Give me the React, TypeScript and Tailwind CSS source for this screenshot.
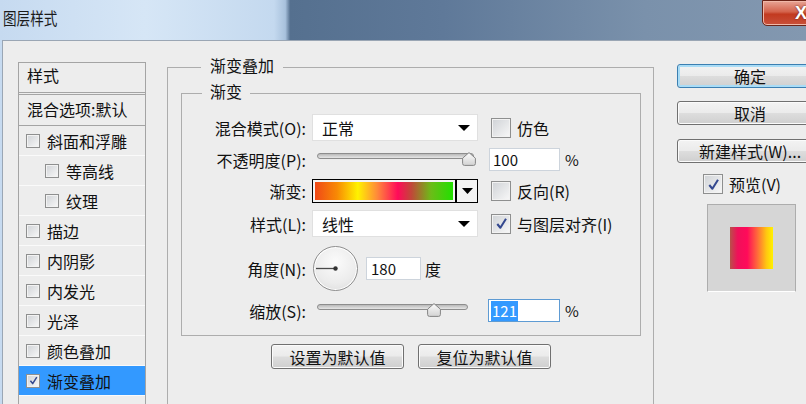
import React from "react";

const sidebarItems = [
  { label: "斜面和浮雕" },
  { label: "等高线", indent: true },
  { label: "纹理", indent: true },
  { label: "描边" },
  { label: "内阴影" },
  { label: "内发光" },
  { label: "光泽" },
  { label: "颜色叠加" },
  { label: "渐变叠加", checked: true, selected: true },
  { label: "图案叠加" },
];

function Box({ checked = false, big = false }: { checked?: boolean; big?: boolean }) {
  return (
    <span
      className={`flex shrink-0 items-center justify-center border border-[#8e8f8f] bg-[linear-gradient(135deg,#cfd2d6,#f8f8f8)] shadow-[inset_0_0_0_1px_#f2f2f2] ${
        big ? "h-[20px] w-[20px]" : "h-[14px] w-[14px]"
      }`}
    >
      {checked && (
        <svg viewBox="0 0 16 16" className={big ? "h-[15px] w-[15px]" : "h-[11px] w-[11px]"}>
          <path d="M3.5 8.5 L6.8 12.5 L12.8 3" fill="none" stroke="#34488f" strokeWidth="2.2" strokeLinejoin="round" />
        </svg>
      )}
    </span>
  );
}

function Button({ children, primary = false, className = "" }: { children: React.ReactNode; primary?: boolean; className?: string }) {
  return (
    <div
      className={`flex items-center justify-center rounded-[3px] border bg-[linear-gradient(#f3f3f3_0%,#ebebeb_48%,#dddddd_52%,#cfcfcf_100%)] ${
        primary ? "border-[#3c7fb1] shadow-[inset_0_0_0_2px_#a9dcf6]" : "border-[#707070] shadow-[inset_0_0_0_1px_#fbfbfb]"
      } ${className}`}
    >
      {children}
    </div>
  );
}

function Select({ value }: { value: string }) {
  return (
    <div className="flex h-[27px] w-[166px] items-center justify-between border border-[#e0e0e0] bg-white pl-[9px] pr-[7px]">
      <span>{value}</span>
      <svg width="12" height="6" viewBox="0 0 12 6">
        <path d="M0 0H12L6 6Z" fill="#000" />
      </svg>
    </div>
  );
}

function Slider({ track, thumb }: { track: string; thumb: string }) {
  return (
    <div className="relative h-[23px] w-[166px]">
      <div className={`ml-[5px] mt-[5px] h-[6px] rounded-full border border-[#8d8d8d] bg-[linear-gradient(#b9b9b9,#e6e6e6)] ${track}`} />
      <svg className={`absolute top-[4px] ${thumb}`} width="14" height="14" viewBox="0 0 14 14">
        <defs>
          <linearGradient id="th" x1="0" y1="0" x2="0" y2="1">
            <stop offset="0" stopColor="#fdfdfd" />
            <stop offset="1" stopColor="#d2d2d2" />
          </linearGradient>
        </defs>
        <path d="M7 0.6 L13.4 6.2 V11.5 Q13.4 13.4 11.5 13.4 H2.5 Q0.6 13.4 0.6 11.5 V6.2 Z" fill="url(#th)" stroke="#858585" strokeWidth="1" />
      </svg>
    </div>
  );
}

function Row({ label, children, className = "" }: { label: string; children: React.ReactNode; className?: string }) {
  return (
    <div className={`flex items-center ${className}`}>
      <span className="w-[124px] shrink-0 text-right">{label}</span>
      <div className="ml-[6px] flex items-center">{children}</div>
    </div>
  );
}

export default function App() {
  return (
    <div className="flex h-[404px] w-[806px] flex-col overflow-hidden bg-[linear-gradient(to_right,#c6daf0_0%,#d6e6f6_18%,#c4d9ef_34%,#a8c1dc_35.4%,#55708f_36%,#5f7999_55%,#7a91ab_80%,#8398b0_100%)] font-['Noto_Sans_CJK_SC',sans-serif] text-[16px] leading-[20px] text-[#111]">
      {/* title bar */}
      <div className="flex h-[40px] shrink-0 items-start">
        <span className="ml-[3px] mt-[8px] origin-left scale-x-[0.8] text-[17px] text-[#1b1b1b]">图层样式</span>
        <div className="-mr-[30px] ml-auto flex h-[26px] w-[74px] items-center rounded-bl-[5px] border border-[#6b2418] bg-[linear-gradient(#e8a596_0%,#d4634c_45%,#c23a20_55%,#c8503a_100%)] pl-[32px] shadow-[inset_0_0_0_1px_#f0b8a8]">
          <span className="font-['Liberation_Sans',sans-serif] text-[18px] font-bold text-white [text-shadow:0_0_2px_#5a1a10]">X</span>
        </div>
      </div>

      {/* body */}
      <div className="ml-[2px] flex min-h-0 flex-1 items-start border-l border-t border-[#9aa6b4] bg-[#ededed]">
        {/* sidebar */}
        <div className="ml-[15px] mt-[21px] w-[128px] shrink-0 border border-[#a4a4a4]">
          <div className="h-[32px] border-b-[3px] border-double border-[#a4a4a4] pl-[8px] pt-[2px]">样式</div>
          <div className="flex h-[31px] items-center border-b border-[#a4a4a4] pb-[2px] pl-[8px]">混合选项:默认</div>
          {sidebarItems.map((it) => (
            <div
              key={it.label}
              className={`flex h-[30px] items-center gap-[7px] border-b border-[#fafafa] ${it.indent ? "pl-[26px]" : "pl-[7px]"} ${
                it.selected ? "bg-[#3399ff]" : ""
              }`}
            >
              <Box checked={it.checked} />
              <span>{it.label}</span>
            </div>
          ))}
        </div>

        {/* main group */}
        <div className="ml-[21px] mt-[26px] w-[487px] shrink-0 border border-[#adadad] pb-[80px] pl-[13px] pr-[12px]">
          <span className="-mt-[13px] ml-[20px] block w-fit bg-[#ededed] px-[9px]">渐变叠加</span>
          <div className="mt-[18px] border border-[#adadad] pb-[13px]">
            <span className="-mt-[13px] ml-[20px] block w-fit bg-[#ededed] px-[8px]">渐变</span>

            <Row label="混合模式(O):" className="mt-[13px]">
              <Select value="正常" />
              <span className="ml-[13px]">
                <Box big />
              </span>
              <span className="ml-[6px]">仿色</span>
            </Row>

            <Row label="不透明度(P):" className="mt-[7px]">
              <Slider track="w-[157px]" thumb="left-[150px]" />
              <div className="ml-[11px] flex h-[23px] w-[71px] items-center border border-[#cdd4dc] bg-white pl-[3px] text-[15px]">100</div>
              <span className="ml-[5px] text-[15px]">%</span>
            </Row>

            <Row label="渐变:" className="mt-[8px]">
              <div className="flex h-[24px] w-[166px] border border-black">
                <div className="flex-1 bg-[#f4f4f4] p-[2px]">
                  <div className="h-full bg-[linear-gradient(to_right,#f04818_0%,#f88a04_16%,#fff200_31%,#ff8a3a_45%,#ff0a5a_60%,#c04838_70%,#6cbc18_84%,#22e000_100%)]" />
                </div>
                <div className="flex w-[22px] items-center justify-center border-l-2 border-black bg-[#f4f4f4]">
                  <svg width="11" height="6" viewBox="0 0 11 6">
                    <path d="M0 0H11L5.5 6Z" fill="#000" />
                  </svg>
                </div>
              </div>
              <span className="ml-[13px]">
                <Box big />
              </span>
              <span className="ml-[6px]">反向(R)</span>
            </Row>

            <Row label="样式(L):" className="mt-[7px]">
              <Select value="线性" />
              <span className="ml-[13px]">
                <Box big checked />
              </span>
              <span className="ml-[6px]">与图层对齐(I)</span>
            </Row>

            <Row label="角度(N):" className="mt-[9px]">
              <div className="ml-[1px] h-[45px] w-[45px] rounded-full border border-[#8f8f8f] bg-[radial-gradient(circle_at_50%_35%,#fbfbfb_0%,#ececec_60%,#d8d8d8_100%)] shadow-[inset_0_0_0_1px_#ffffff]">
                <svg viewBox="0 0 43 43" className="h-full w-full">
                  <line x1="2" y1="21.5" x2="21.5" y2="21.5" stroke="#4a4a4a" strokeWidth="1.3" />
                  <circle cx="21.5" cy="21.5" r="2.2" fill="#333" />
                </svg>
              </div>
              <div className="ml-[8px] flex h-[23px] w-[55px] items-center border border-[#cdd4dc] bg-white pl-[4px] text-[15px]">180</div>
              <span className="ml-[4px]">度</span>
            </Row>

            <Row label="缩放(S):" className="mt-[8px]">
              <Slider track="w-[151px]" thumb="left-[115px]" />
              <div className="ml-[10px] flex h-[23px] w-[72px] items-center border border-[#5e9bd3] bg-white pl-[2px] text-[15px]">
                <span className="bg-[#3399ff] px-[1px] text-white">121</span>
              </div>
              <span className="ml-[5px] text-[15px]">%</span>
            </Row>
          </div>

          <div className="mt-[8px] flex justify-center gap-[14px]">
            <Button className="h-[25px] w-[133px]">设置为默认值</Button>
            <Button className="h-[25px] w-[133px]">复位为默认值</Button>
          </div>
        </div>

        {/* right column */}
        <div className="ml-[23px] mt-[23px] flex w-[146px] shrink-0 flex-col">
          <Button primary className="h-[24px]">确定</Button>
          <Button className="mt-[13px] h-[24px]">取消</Button>
          <Button className="mt-[14px] h-[24px]">新建样式(W)...</Button>
          <div className="ml-[26px] mt-[11px] flex items-center">
            <Box big checked />
            <span className="ml-[6px]">预览(V)</span>
          </div>
          <div className="ml-[30px] mt-[10px] flex h-[88px] w-[89px] items-center justify-center border border-[#adadad] border-b-white bg-[#d6d6d6]">
            <div className="h-[42px] w-[43px] bg-[linear-gradient(to_right,#b8504a_0%,#f0105a_18%,#ff0a5a_40%,#ff7038_65%,#ffc810_85%,#fff200_100%)]" />
          </div>
        </div>
      </div>
    </div>
  );
}
